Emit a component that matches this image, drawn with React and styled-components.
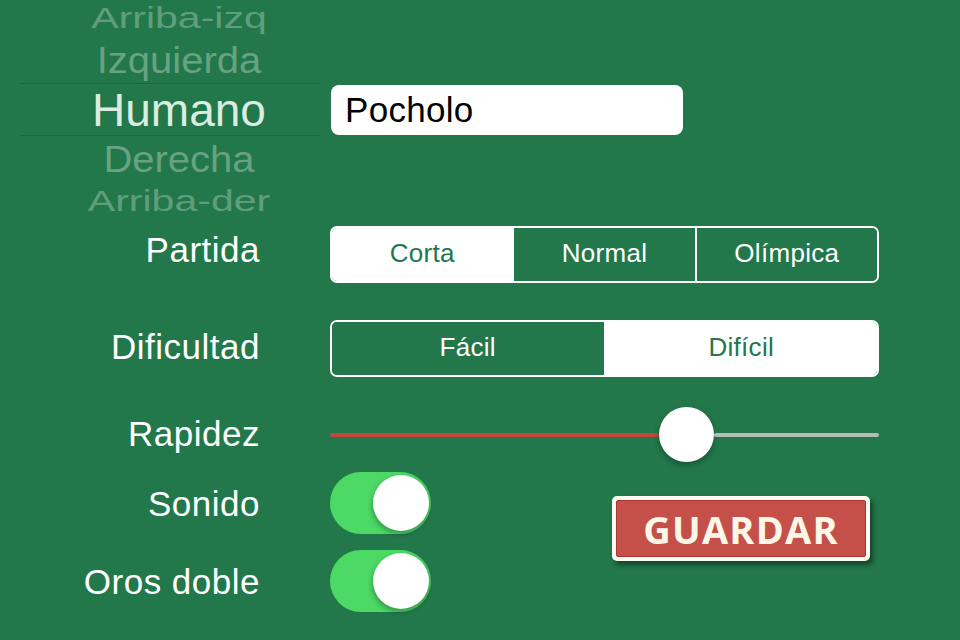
import React from "react";
import styled, { createGlobalStyle } from "styled-components";

const GREEN = "#22784a";

const Global = createGlobalStyle`
  html, body { margin: 0; padding: 0; }
  body {
    width: 960px;
    height: 640px;
    overflow: hidden;
    background: ${GREEN};
    font-family: "Liberation Sans", Arial, sans-serif;
  }
`;

const Screen = styled.div`
  width: 960px;
  height: 640px;
  background: ${GREEN};
  display: flex;
  flex-direction: column;
`;

const Top = styled.div`
  display: flex;
  align-items: flex-start;
  height: 221px;
`;

const Picker = styled.div`
  width: 300px;
  margin-left: 20px;
  display: flex;
  flex-direction: column;
`;

const PickerItem = styled.div`
  height: ${(p) => p.$h}px;
  display: flex;
  align-items: center;
  justify-content: center;
  padding-left: 18px;
  box-sizing: border-box;
  white-space: nowrap;
  ${(p) =>
    p.$selected
      ? `border-top: 1px solid #1b673d; border-bottom: 1px solid #1b673d;`
      : ""}
`;

const PickerText = styled.span`
  display: inline-block;
  font-size: ${(p) => p.$size}px;
  line-height: 1;
  color: ${(p) => p.$color};
  transform: scaleY(${(p) => p.$sy});
`;

const NameField = styled.div`
  margin-left: 11px;
  margin-top: 85px;
  width: 352px;
  height: 50px;
  background: #fff;
  border-radius: 8px;
  display: flex;
  align-items: center;
  padding-left: 14px;
  box-sizing: border-box;
  font-size: 35px;
  letter-spacing: 0.3px;
  color: #000;
`;

const Row = styled.div`
  display: grid;
  grid-template-columns: 259px 549px;
  column-gap: 71px;
  align-items: center;
  margin-top: ${(p) => p.$mt}px;
`;

const Label = styled.div`
  text-align: right;
  color: #fff;
  font-size: 35px;
  letter-spacing: 0.5px;
  line-height: 1;
  white-space: nowrap;
  margin-right: -1px;
  padding-bottom: ${(p) => p.$raise || 0}px;
`;

const Segmented = styled.div`
  display: flex;
  height: 57px;
  border: 2px solid #fff;
  border-radius: 7px;
  overflow: hidden;
  box-sizing: border-box;
`;

const Segment = styled.div`
  flex: 1;
  display: flex;
  align-items: center;
  justify-content: center;
  font-size: 26px;
  letter-spacing: 0.3px;
  padding-bottom: 2px;
  background: ${(p) => (p.$active ? "#fff" : GREEN)};
  color: ${(p) => (p.$active ? GREEN : "#fff")};
  & + & {
    border-left: 2px solid #fff;
  }
`;

const Slider = styled.div`
  display: flex;
  align-items: center;
  height: 55px;
`;

const Track = styled.div`
  height: 4px;
  border-radius: 2px;
  background: ${(p) => p.$color};
  flex: ${(p) => (p.$grow ? "1" : "none")};
`;

const Thumb = styled.div`
  width: 55px;
  height: 55px;
  border-radius: 50%;
  background: #fff;
  box-shadow: 0 3px 6px rgba(0, 0, 0, 0.3);
  flex: none;
`;

const Bottom = styled.div`
  display: grid;
  grid-template-columns: 259px 549px;
  grid-template-rows: 62px 62px;
  column-gap: 71px;
  row-gap: 16px;
  align-items: center;
  margin-top: 10px;
`;

const BottomLabel = styled(Label)`
  grid-column: 1;
  grid-row: ${(p) => p.$row};
`;

const Switch = styled.div`
  grid-column: 2;
  grid-row: ${(p) => p.$row};
  width: 101px;
  height: 62px;
  border-radius: 31px;
  background: linear-gradient(90deg, #4cd964 0%, #4bd865 70%, #43c95b 100%);
  display: flex;
  align-items: center;
  justify-content: flex-end;
  padding-right: 2px;
  box-sizing: border-box;
`;

const Knob = styled.div`
  width: 56px;
  height: 56px;
  border-radius: 50%;
  background: #fff;
  box-shadow: -1px 3px 5px rgba(0, 0, 0, 0.28);
`;

const SaveButton = styled.button`
  grid-column: 2;
  grid-row: 1 / span 2;
  justify-self: end;
  align-self: start;
  margin-top: 24px;
  margin-right: 9px;
  width: 258px;
  height: 65px;
  padding: 0;
  border: 4px solid #fdfbf3;
  border-radius: 5px;
  background: #fdfbf3;
  box-shadow: 3px 4px 5px rgba(0, 0, 0, 0.45);
  box-sizing: border-box;
  display: flex;
  cursor: pointer;
`;

const SaveInner = styled.span`
  flex: 1;
  display: flex;
  align-items: center;
  justify-content: center;
  background: #c5504a;
  border: 1px solid #a8362f;
  border-radius: 2px;
  font-family: "Open Sans", "Liberation Sans", sans-serif;
  font-weight: 700;
  font-size: 38px;
  color: #fdf7e8;
  letter-spacing: 1.2px;
`;

const pickerItems = [
  { t: "Arriba-izq", h: 36, size: 41, sy: 0.72, color: "rgba(255,255,255,0.3)" },
  { t: "Izquierda", h: 47, size: 40, sy: 0.93, color: "rgba(255,255,255,0.33)" },
  { t: "Humano", h: 53, size: 46, sy: 1, color: "#dcece1", selected: true },
  { t: "Derecha", h: 46, size: 40, sy: 0.92, color: "rgba(255,255,255,0.33)" },
  { t: "Arriba-der", h: 39, size: 41, sy: 0.72, color: "rgba(255,255,255,0.3)" },
];

export default function App() {
  return (
    <>
      <Global />
      <Screen>
        <Top>
          <Picker>
            {pickerItems.map((it) => (
              <PickerItem key={it.t} $h={it.h} $selected={it.selected}>
                <PickerText $size={it.size} $sy={it.sy} $color={it.color}>
                  {it.t}
                </PickerText>
              </PickerItem>
            ))}
          </Picker>
          <NameField>Pocholo</NameField>
        </Top>

        <Row $mt={5}>
          <Label $raise={10}>Partida</Label>
          <Segmented>
            <Segment $active>Corta</Segment>
            <Segment>Normal</Segment>
            <Segment>Olímpica</Segment>
          </Segmented>
        </Row>

        <Row $mt={37}>
          <Label $raise={4}>Dificultad</Label>
          <Segmented>
            <Segment>Fácil</Segment>
            <Segment $active>Difícil</Segment>
          </Segmented>
        </Row>

        <Row $mt={30}>
          <Label $raise={2}>Rapidez</Label>
          <Slider>
            <Track $color="#c4473e" style={{ width: 329 }} />
            <Thumb />
            <Track $color="#b5bcb8" $grow />
          </Slider>
        </Row>

        <Bottom>
          <BottomLabel $row={1}>Sonido</BottomLabel>
          <Switch $row={1}>
            <Knob />
          </Switch>
          <BottomLabel $row={2}>Oros doble</BottomLabel>
          <Switch $row={2}>
            <Knob />
          </Switch>
          <SaveButton>
            <SaveInner>GUARDAR</SaveInner>
          </SaveButton>
        </Bottom>
      </Screen>
    </>
  );
}
